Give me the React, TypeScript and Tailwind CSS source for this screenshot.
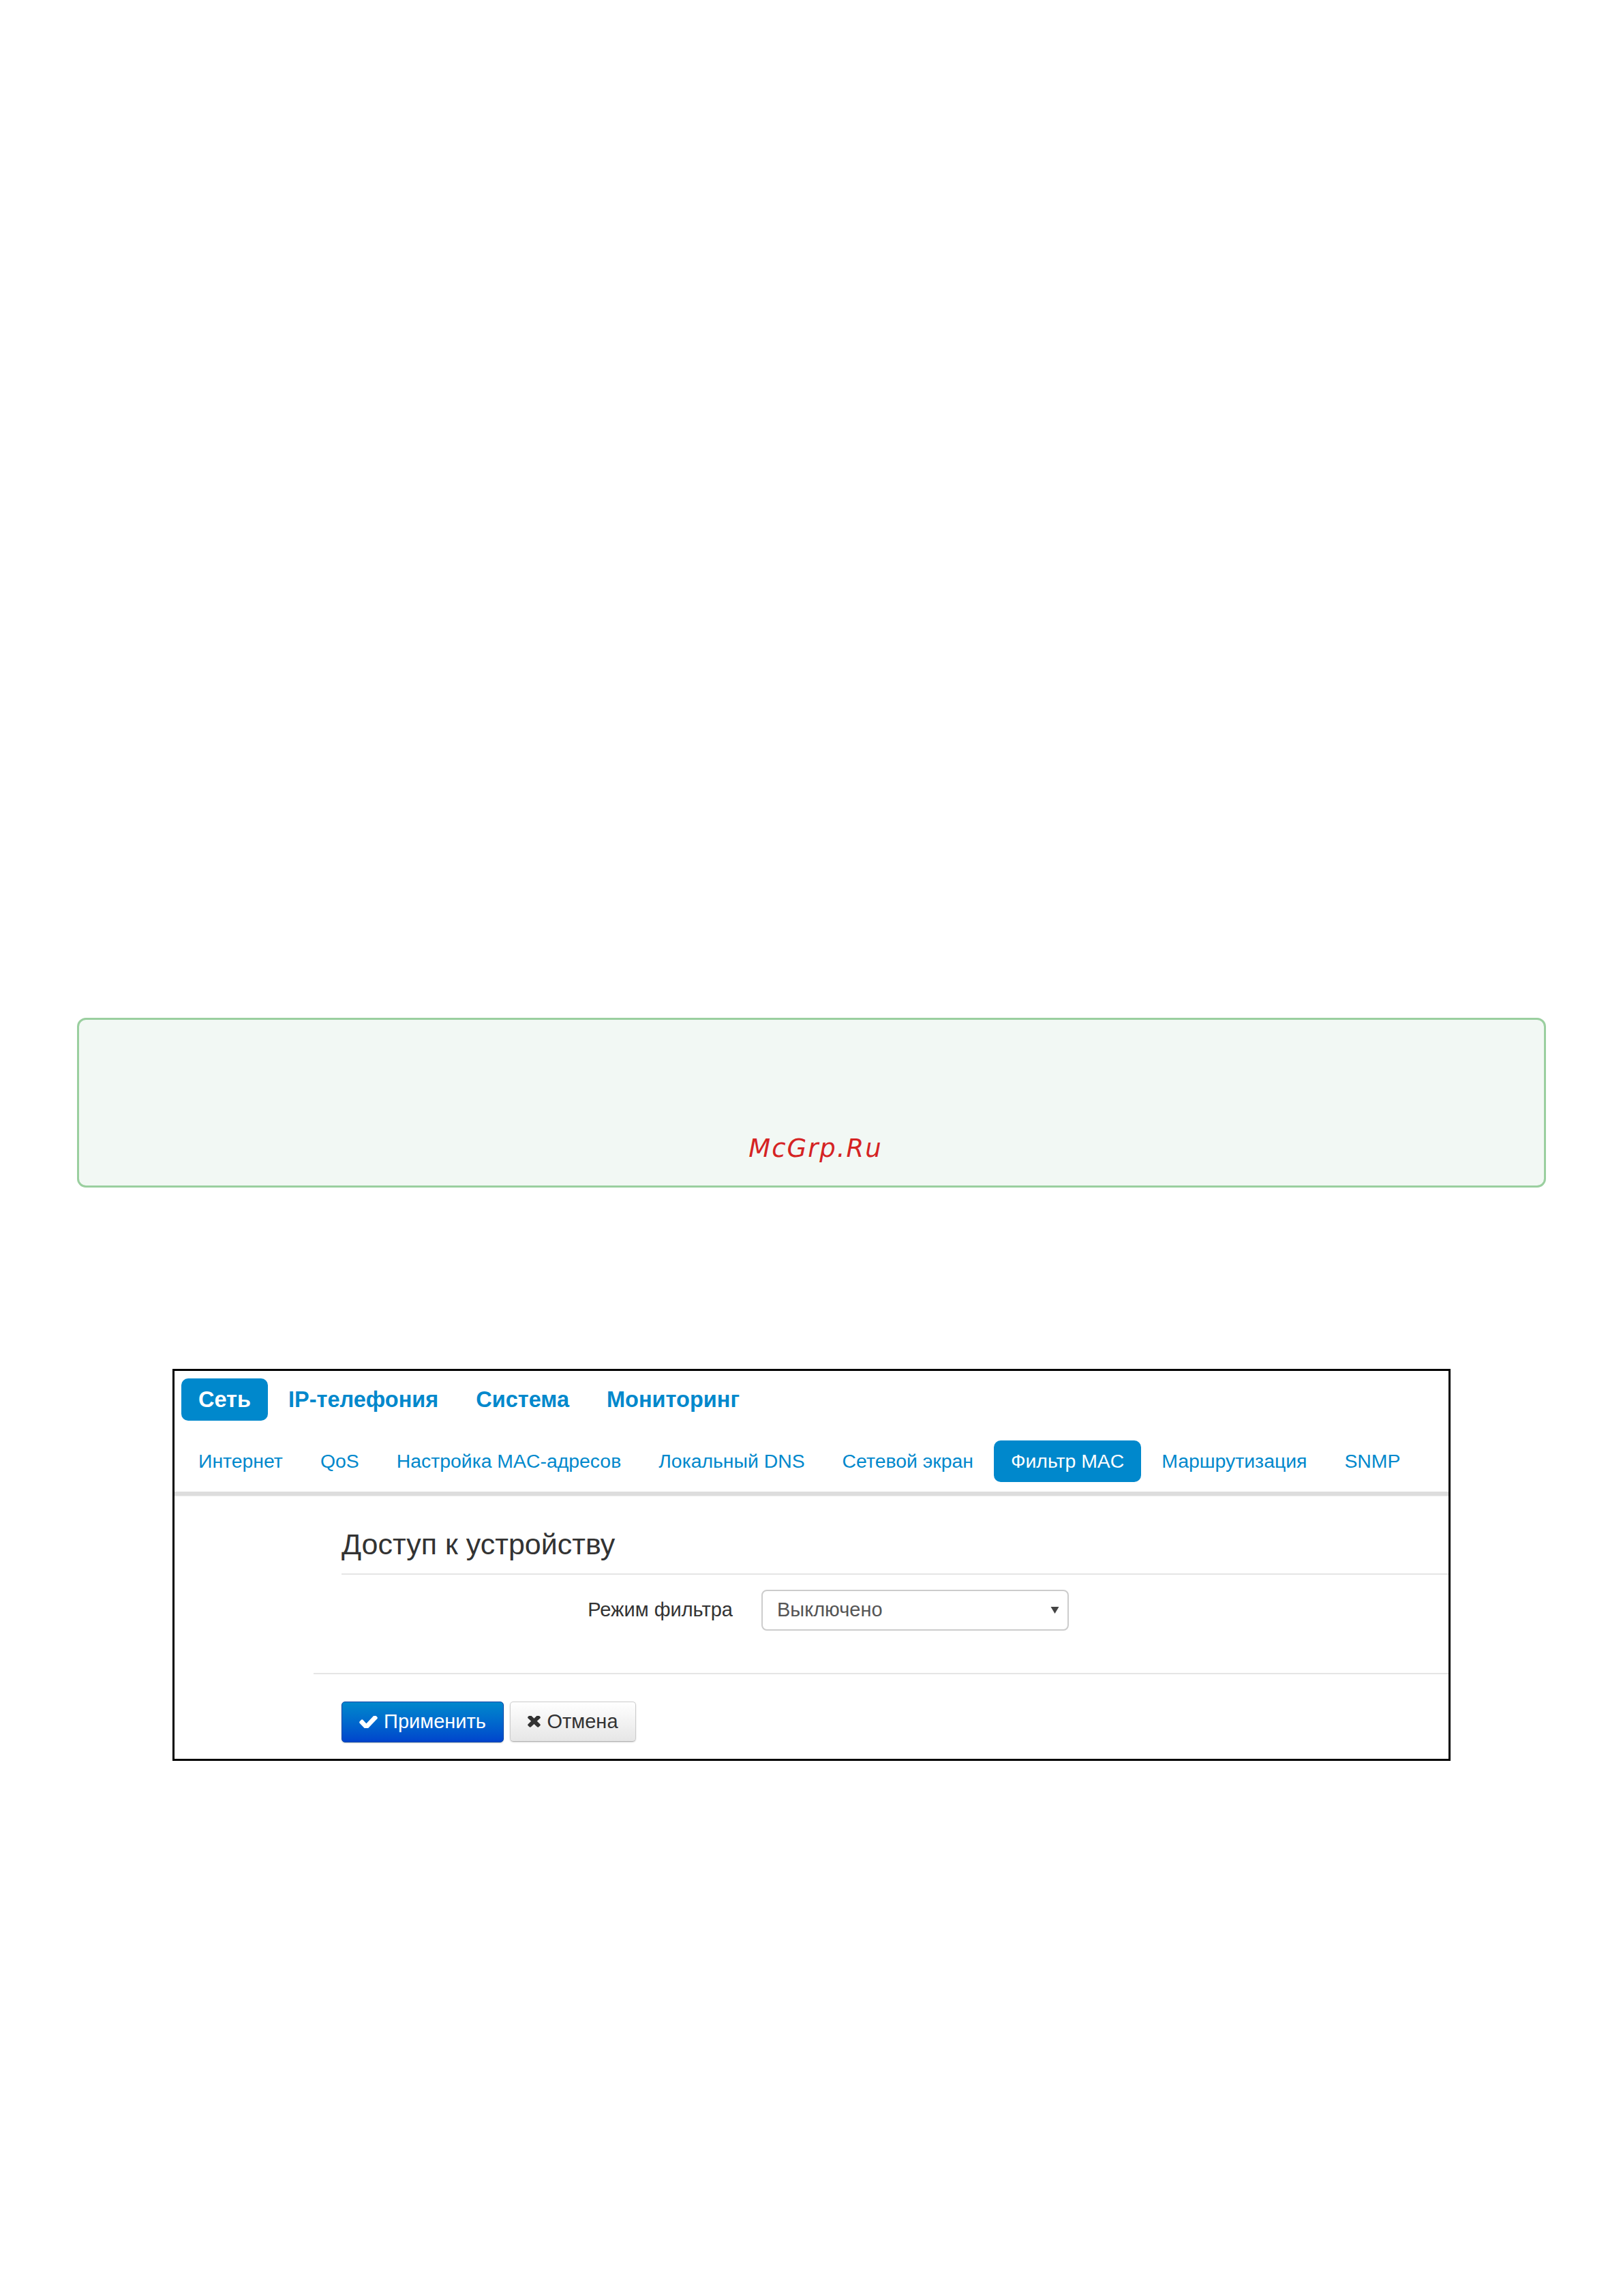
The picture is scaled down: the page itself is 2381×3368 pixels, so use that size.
import React from "react";

const mainTabs = ["Сеть", "IP-телефония", "Система", "Мониторинг"];
const subTabs = [
  "Интернет",
  "QoS",
  "Настройка MAC-адресов",
  "Локальный DNS",
  "Сетевой экран",
  "Фильтр MAC",
  "Маршрутизация",
  "SNMP",
];

function CheckIcon() {
  return (
    <svg viewBox="110 400 1570 1000" className="h-[18px] w-[27px]" fill="currentColor" preserveAspectRatio="none">
      <path d="M1671 566q0 40-28 68l-724 724-136 136q-28 28-68 28t-68-28l-136-136-362-362q-28-28-28-68t28-68l136-136q28-28 68-28t68 28l294 295 656-657q28-28 68-28t68 28l136 136q28 28 28 68z" />
    </svg>
  );
}

function TimesIcon() {
  return (
    <svg viewBox="100 440 1208 1130" className="h-[17px] w-[19px]" fill="currentColor" preserveAspectRatio="none">
      <path d="M1298 1322q0 40-28 68l-136 136q-28 28-68 28t-68-28l-294-294-294 294q-28 28-68 28t-68-28l-136-136q-28-28-28-68t28-68l294-294-294-294q-28-28-28-68t28-68l136-136q28-28 68-28t68 28l294 294 294-294q28-28 68-28t68 28l136 136q28 28 28 68t-28 68l-294 294 294 294q28 28 28 68z" />
    </svg>
  );
}

export default function App() {
  return (
    <main className="min-h-[3368px] w-full bg-white pt-[1493px]">
      {/* Watermark box */}
      <section className="mx-[113px] flex h-[249px] flex-col items-center justify-end rounded-[13px] border-[3px] border-[#9acf9f] bg-[#f2f8f4] pb-[32px] pl-[12px]">
        <span className="font-['DejaVu_Sans',sans-serif] text-[37px] italic leading-[44px] tracking-[2px] text-[#d52323]">
          McGrp.Ru
        </span>
      </section>

      {/* Screenshot */}
      <section className="mx-[253px] mt-[266px] border-[3px] border-black bg-white font-['Liberation_Sans',Arial,sans-serif]">
        <nav className="flex gap-[5px] pl-[10px] pt-[11px]">
          {mainTabs.map((t, i) => (
            <span
              key={t}
              className={
                i === 0
                  ? "flex h-[62px] items-center rounded-[10px] bg-[#0088cc] px-[25px] text-[32.5px] font-bold text-white"
                  : "flex h-[62px] items-center px-[25px] text-[32.5px] font-bold text-[#0088cc]"
              }
            >
              {t}
            </span>
          ))}
        </nav>

        <nav className="mt-[29px] flex gap-[5px] pl-[10px]">
          {subTabs.map((t) => (
            <span
              key={t}
              className={
                t === "Фильтр MAC"
                  ? "flex h-[61px] items-center rounded-[10px] bg-[#0088cc] px-[25px] text-[28.4px] text-white"
                  : "flex h-[61px] items-center px-[25px] text-[28.4px] text-[#0088cc]"
              }
            >
              {t}
            </span>
          ))}
        </nav>

        <div className="mt-[14px] h-[7px] border-b border-[#ececec] bg-[#dddddd]" />

        <div className="ml-[204px] pt-[47px]">
          <div className="pl-[41px]">
            <h2 className="border-b-2 border-[#e5e5e5] pb-[20px] text-[43px] leading-[46px] text-[#333333]">
              Доступ к устройству
            </h2>
            <div className="mt-[22px] flex items-center">
              <label className="w-[574px] text-right text-[29px] text-[#333333]">Режим фильтра</label>
              <div className="ml-[42px] flex h-[60px] w-[451px] items-center justify-between rounded-[8px] border-2 border-[#cccccc] bg-white pl-[21px] pr-[12px]">
                <span className="text-[29px] text-[#555555]">Выключено</span>
                <svg viewBox="0 0 12 10" className="h-[10px] w-[13px] text-[#444444]" fill="currentColor">
                  <path d="M0 0h12L6 10z" />
                </svg>
              </div>
            </div>
          </div>

          <div className="mt-[62px] border-b-2 border-[#e5e5e5]" />

          <div className="flex gap-[9px] pb-[24px] pl-[41px] pt-[40px]">
            <button className="flex h-[60px] w-[238px] items-center justify-center gap-[9px] rounded-[5px] border border-[#0044aa] bg-gradient-to-b from-[#0088cc] to-[#0044cc] text-[29px] text-white shadow-[0_1px_2px_rgba(0,0,0,0.2)]">
              <CheckIcon />
              Применить
            </button>
            <button className="flex h-[59px] w-[185px] items-center justify-center gap-[9px] rounded-[5px] border border-[#cccccc] border-b-[#b3b3b3] bg-gradient-to-b from-white to-[#e6e6e6] text-[29px] text-[#333333] shadow-[0_1px_2px_rgba(0,0,0,0.15)]">
              <TimesIcon />
              Отмена
            </button>
          </div>
        </div>
      </section>
    </main>
  );
}
